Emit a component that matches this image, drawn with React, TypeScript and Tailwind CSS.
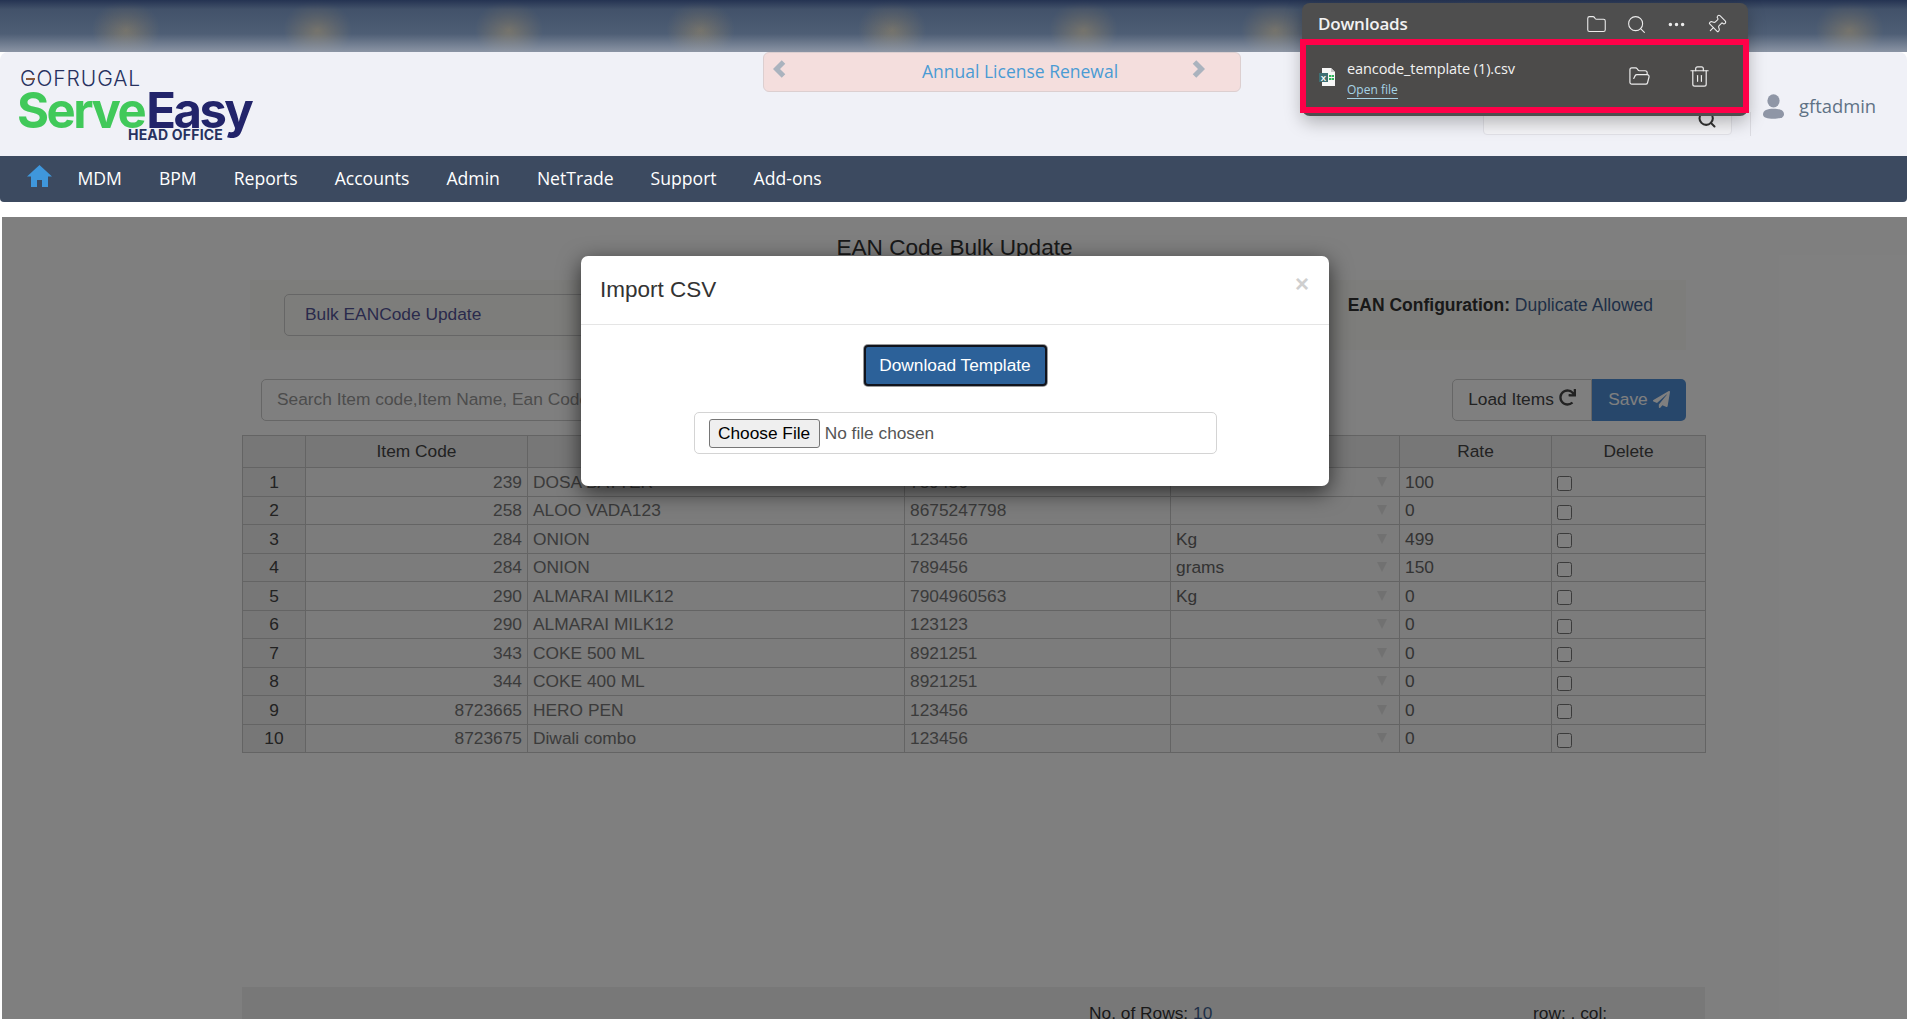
import { Folder, FolderOpen, Search, Ellipsis, Pin, Trash2 } from "lucide-react";
import { FaRedo, FaPaperPlane } from "react-icons/fa";

const rows = [
  ["1", "239", "DOSA BATTER", "789456", "", "100"],
  ["2", "258", "ALOO VADA123", "8675247798", "", "0"],
  ["3", "284", "ONION", "123456", "Kg", "499"],
  ["4", "284", "ONION", "789456", "grams", "150"],
  ["5", "290", "ALMARAI MILK12", "7904960563", "Kg", "0"],
  ["6", "290", "ALMARAI MILK12", "123123", "", "0"],
  ["7", "343", "COKE 500 ML", "8921251", "", "0"],
  ["8", "344", "COKE 400 ML", "8921251", "", "0"],
  ["9", "8723665", "HERO PEN", "123456", "", "0"],
  ["10", "8723675", "Diwali combo", "123456", "", "0"],
];

const nav = ["MDM", "BPM", "Reports", "Accounts", "Admin", "NetTrade", "Support", "Add-ons"];

function Logo() {
  return (
    <div className="w-[745px] shrink-0 pl-[17px] pt-[16px] font-['Inter',sans-serif]">
      <div className="relative w-fit pl-[3px] text-[21px] leading-[22px] font-light tracking-[0.9px] text-[#27315f]">
        GOFRUGAL
        <span className="absolute left-[9px] top-[10px] h-[2px] w-[9px] bg-[#8a5a3a]" />
      </div>
      <div className="mt-[1px] flex text-[49px] leading-[40px] font-bold tracking-[-2.5px]">
        <span className="text-[#41c95a]">Serve</span>
        <span className="ml-[2px] text-[#22246a]">Easy</span>
      </div>
      <div className="-mt-[3px] pl-[111px] text-[14px] leading-[13px] font-bold tracking-[0.2px] text-[#27315f]">HEAD OFFICE</div>
    </div>
  );
}

function HomeIcon() {
  return (
    <svg width="25" height="22" viewBox="0 0 25 22" className="mb-[6px] shrink-0" fill="#3f97dc">
      <path d="M12.5 0 L25 11.5 L21 11.5 L21 22 L15 22 L15 15 L10 15 L10 22 L4 22 L4 11.5 L0 11.5 Z" />
    </svg>
  );
}

function UserIcon() {
  return (
    <svg width="21" height="27" viewBox="0 0 24 28" fill="#8f96a6">
      <ellipse cx="12" cy="7.5" rx="7" ry="7.5" />
      <path d="M0 23 C0 18 5 16.5 12 16.5 C19 16.5 24 18 24 23 C24 26.5 19 28 12 28 C5 28 0 26.5 0 23 Z" />
    </svg>
  );
}

function ExcelIcon() {
  return (
    <svg width="20" height="20" viewBox="0 0 20 20">
      <path d="M4 1 H13 L17 5 V19 H4 Z" fill="#f7f7f7" />
      <path d="M13 1 L17 5 H13 Z" fill="#c9c9c9" />
      <rect x="11" y="8" width="2.5" height="2" fill="#2fb35a" />
      <rect x="14" y="8" width="2" height="2" fill="#2fb35a" />
      <rect x="11" y="11" width="2.5" height="2" fill="#2fb35a" />
      <rect x="14" y="11" width="2" height="2" fill="#2fb35a" />
      <rect x="1" y="6" width="9" height="9" fill="#3f6f73" />
      <text x="5.5" y="13.5" textAnchor="middle" fontSize="8" fontWeight="700" fill="#ffffff" fontFamily="Liberation Sans">X</text>
    </svg>
  );
}

function Caret() {
  return (
    <svg width="10" height="10" viewBox="0 0 9 9" className="shrink-0" fill="#e2e2e2">
      <path d="M0 0 H9 L4.5 9 Z" />
    </svg>
  );
}

function Chevron({ dir }: { dir: "left" | "right" }) {
  return (
    <svg width="13" height="18" viewBox="0 0 13 18" className="-mt-[6px] shrink-0" fill="none" stroke="#aab3be" strokeWidth="5">
      <path d={dir === "left" ? "M10.5 2 L3.5 9 L10.5 16" : "M2.5 2 L9.5 9 L2.5 16"} />
    </svg>
  );
}

function Downloads() {
  return (
    <div className="absolute left-[1302px] top-[3px] z-30 h-[113px] w-[446px] rounded-[8px] bg-[#4e4e4e] font-['Open_Sans',sans-serif] text-white shadow-[0_6px_18px_rgba(0,0,0,0.28)]">
      <div className="flex h-[36px] items-center pl-[16px] pt-[6px]">
        <div className="flex-1 text-[17px] font-semibold tracking-[-0.2px] text-[#f2f2f2]">Downloads</div>
        <div className="flex items-center gap-[19px] pr-[21px] text-[#ececec]">
          <Folder size={21} strokeWidth={1.25} />
          <Search size={21} strokeWidth={1.25} />
          <Ellipsis size={21} strokeWidth={2} />
          <Pin size={21} strokeWidth={1.25} className="rotate-45" />
        </div>
      </div>
      <div className="-ml-[2px] h-[74px] w-[449px] border-[6px] border-[#ff0048] bg-[#4c4b4a]">
        <div className="flex h-full items-center">
          <div className="ml-[12px] w-[29px] shrink-0 pt-[1px]"><ExcelIcon /></div>
          <div className="flex-1 pt-[5px]">
            <div className="text-[14.5px] leading-[19px] tracking-[-0.1px] text-[#f2f2f2]">eancode_template (1).csv</div>
            <div className="mt-[3px] w-fit border-b border-[#a6d3e6] text-[12px] leading-[17px] text-[#a6d3e6]">Open file</div>
          </div>
          <div className="flex items-center gap-[37px] pr-[32px] pt-[1px] text-[#ececec]">
            <FolderOpen size={23} strokeWidth={1.25} />
            <Trash2 size={23} strokeWidth={1.25} />
          </div>
        </div>
      </div>
    </div>
  );
}

function Modal() {
  return (
    <div className="absolute left-[579px] top-[39px] z-20 h-[230px] w-[748px] rounded-[7px] bg-white shadow-[0_6px_22px_rgba(0,0,0,0.65)]">
      <div className="flex h-[69px] items-start justify-between border-b border-[#e5e5e5] pl-[19px] pr-[20px]">
        <div className="pt-[19px] text-[22.5px] leading-[29px] text-[#333]">Import CSV</div>
        <div className="pt-[15px] text-[24px] leading-[26px] font-bold text-[#cfcfcf]">×</div>
      </div>
      <div className="flex flex-col items-center pt-[20px]">
        <button className="h-[41px] w-[183px] rounded-[4px] border-2 border-[#11141d] bg-[#2c6199] text-[17.3px] text-white shadow-[0_0_0_1px_#9a9a9a]">
          Download Template
        </button>
        <div className="mt-[26px] flex h-[42px] w-[523px] items-center rounded-[5px] border border-[#d4d4d4] pl-[14px] pr-[15px] pt-[1px]">
          <input
            type="file"
            className="w-full text-[17.3px] text-[#555] file:mr-[5px] file:h-[29px] file:rounded-[3px] file:border file:border-solid file:border-[#767676] file:bg-[#efefef] file:px-[8.5px] file:text-[17.3px] file:text-black"
          />
        </div>
      </div>
    </div>
  );
}

function Table() {
  return (
    <table className="ml-[240px] mt-[14px] w-[1463px] table-fixed border-collapse text-[17.33px] leading-[20px] text-[#777]">
      <colgroup>
        <col className="w-[63px]" />
        <col className="w-[222px]" />
        <col className="w-[377px]" />
        <col className="w-[266px]" />
        <col className="w-[229px]" />
        <col className="w-[152px]" />
        <col className="w-[154px]" />
      </colgroup>
      <thead>
        <tr className="h-[32px] bg-[#eeeeee] text-[#444]">
          {["", "Item Code", "Item Name", "EAN Code", "UOM", "Rate", "Delete"].map((h, i) => (
            <th key={i} className="border border-[#c8c8c8] pb-[1px] font-normal">{h}</th>
          ))}
        </tr>
      </thead>
      <tbody>
        {rows.map((r) => (
          <tr key={r[0]} className="h-[28.5px] bg-[#f8f8f8]">
            <td className="border border-[#c8c8c8] bg-[#eeeeee] text-center text-[#444]">{r[0]}</td>
            <td className="border border-[#c8c8c8] px-[5px] text-right">{r[1]}</td>
            <td className="border border-[#c8c8c8] px-[5px]">{r[2]}</td>
            <td className="border border-[#c8c8c8] px-[5px]">{r[3]}</td>
            <td className="border border-[#c8c8c8] px-[5px]">
              <div className="flex items-center justify-between pr-[7px] text-[#666]">
                <span className="h-[20px]">{r[4]}</span>
                <Caret />
              </div>
            </td>
            <td className="border border-[#c8c8c8] px-[5px] text-[#666]">{r[5]}</td>
            <td className="border border-[#c8c8c8] px-[5px] pt-[4px]">
              <input type="checkbox" className="block h-[15px] w-[15px]" />
            </td>
          </tr>
        ))}
      </tbody>
    </table>
  );
}

export default function App() {
  return (
    <div className="relative h-[1019px] w-[1907px] overflow-hidden bg-white font-['Liberation_Sans',sans-serif]">
      <div className="h-[52px] bg-[#4e5e75] bg-[radial-gradient(ellipse_34px_30px_at_126px_30px,rgba(150,135,105,0.6),transparent)] bg-[length:191.5px_52px]">
        <div className="h-full bg-[linear-gradient(180deg,rgba(30,44,76,0.85)_0%,rgba(45,60,85,0.35)_18%,rgba(80,95,115,0)_65%,rgba(165,172,185,0.7)_100%)]" />
      </div>

      <header className="flex h-[104px] rounded-t-[8px] bg-[#f0f1f7]">
        <Logo />
        <div className="ml-[18px] flex h-[40px] w-[478px] items-center justify-between rounded-[6px] border border-[#dccfd0] bg-[#f4dedd] pl-[9px] pr-[35px] font-['Open_Sans',sans-serif]">
          <Chevron dir="left" />
          <span className="flex-1 pb-[2px] pl-[136px] text-[17.5px] text-[#4a9bd4]">Annual License Renewal</span>
          <Chevron dir="right" />
        </div>
        <div className="ml-[242px] mt-[43px] flex h-[40px] w-[249px] items-end justify-end rounded-b-[4px] border border-[#e2e2e8] bg-[#f5f5f8] pb-[5px] pr-[14px]">
          <Search size={20} strokeWidth={2.5} className="text-[#333]" />
        </div>
        <div className="ml-[18px] mt-[60px] h-[24px] w-px bg-[#dcdce2]" />
        <div className="ml-[12px] mt-[39px] flex h-[30px] items-center gap-[15px] font-['Open_Sans',sans-serif] text-[18.4px] text-[#5f7285]">
          <UserIcon />
          <span>gftadmin</span>
        </div>
      </header>

      <nav className="flex h-[46px] items-center rounded-b-[4px] bg-[#3c4a60] pl-[27px] font-['Open_Sans',sans-serif] text-[17.6px] text-white">
        <HomeIcon />
        <ul className="ml-[7px] flex pb-[2px]">
          {nav.map((n) => (
            <li key={n} className="px-[18.5px]">{n}</li>
          ))}
        </ul>
      </nav>

      <main className="pl-[2px] pt-[15px]">
        <div className="relative h-[802px] bg-white">
          <div className="pt-[18px] text-center text-[22.6px] leading-[26px] text-[#333]">EAN Code Bulk Update</div>

          <section className="ml-[248px] mt-[19px] flex h-[70px] w-[1436px] items-start justify-between bg-[#fbfbf6] pl-[34px] pr-[33px]">
            <div className="mt-[14px] flex h-[42px] w-[520px] items-center rounded-[5px] border border-[#cccccc] bg-[#fbfbf6] pl-[20px] text-[17.33px] text-[#555599]">
              Bulk EANCode Update
            </div>
            <div className="mt-[14px] text-[17.5px] leading-[22px] text-[#3f5f8f]">
              <b className="text-[#333]">EAN Configuration:</b> Duplicate Allowed
            </div>
          </section>

          <section className="ml-[259px] mt-[29px] flex h-[42px] w-[1425px] items-center justify-between">
            <div className="flex h-[42px] w-[700px] items-center rounded-[5px] border border-[#cccccc] pl-[15px] text-[17.33px] text-[#999]">
              Search Item code,Item Name, Ean Code
            </div>
            <div className="flex h-[42px] text-[17.33px]">
              <div className="flex w-[140px] items-center justify-center gap-[5px] rounded-l-[5px] border border-[#cccccc] text-[#444]">
                Load Items <FaRedo size={17} className="-mt-[5px]" />
              </div>
              <div className="flex w-[94px] items-center justify-center gap-[5px] rounded-r-[5px] bg-[#4f8fd6] text-white">
                Save <FaPaperPlane size={17} className="-mt-[2px]" />
              </div>
            </div>
          </section>

          <Table />

          <section className="ml-[240px] mt-[234px] flex h-[40px] w-[1463px] bg-[#f0f0f0] pl-[847px] pt-[16px] text-[17.33px] leading-[20px] text-[#333]">
            <span className="w-[444px]">No. of Rows: <span className="text-[#3f5f8f]">10</span></span>
            <span>row: , col:</span>
          </section>

          <div className="absolute inset-0 z-10 bg-black/50" />
          <Modal />
        </div>
      </main>

      <Downloads />
    </div>
  );
}
